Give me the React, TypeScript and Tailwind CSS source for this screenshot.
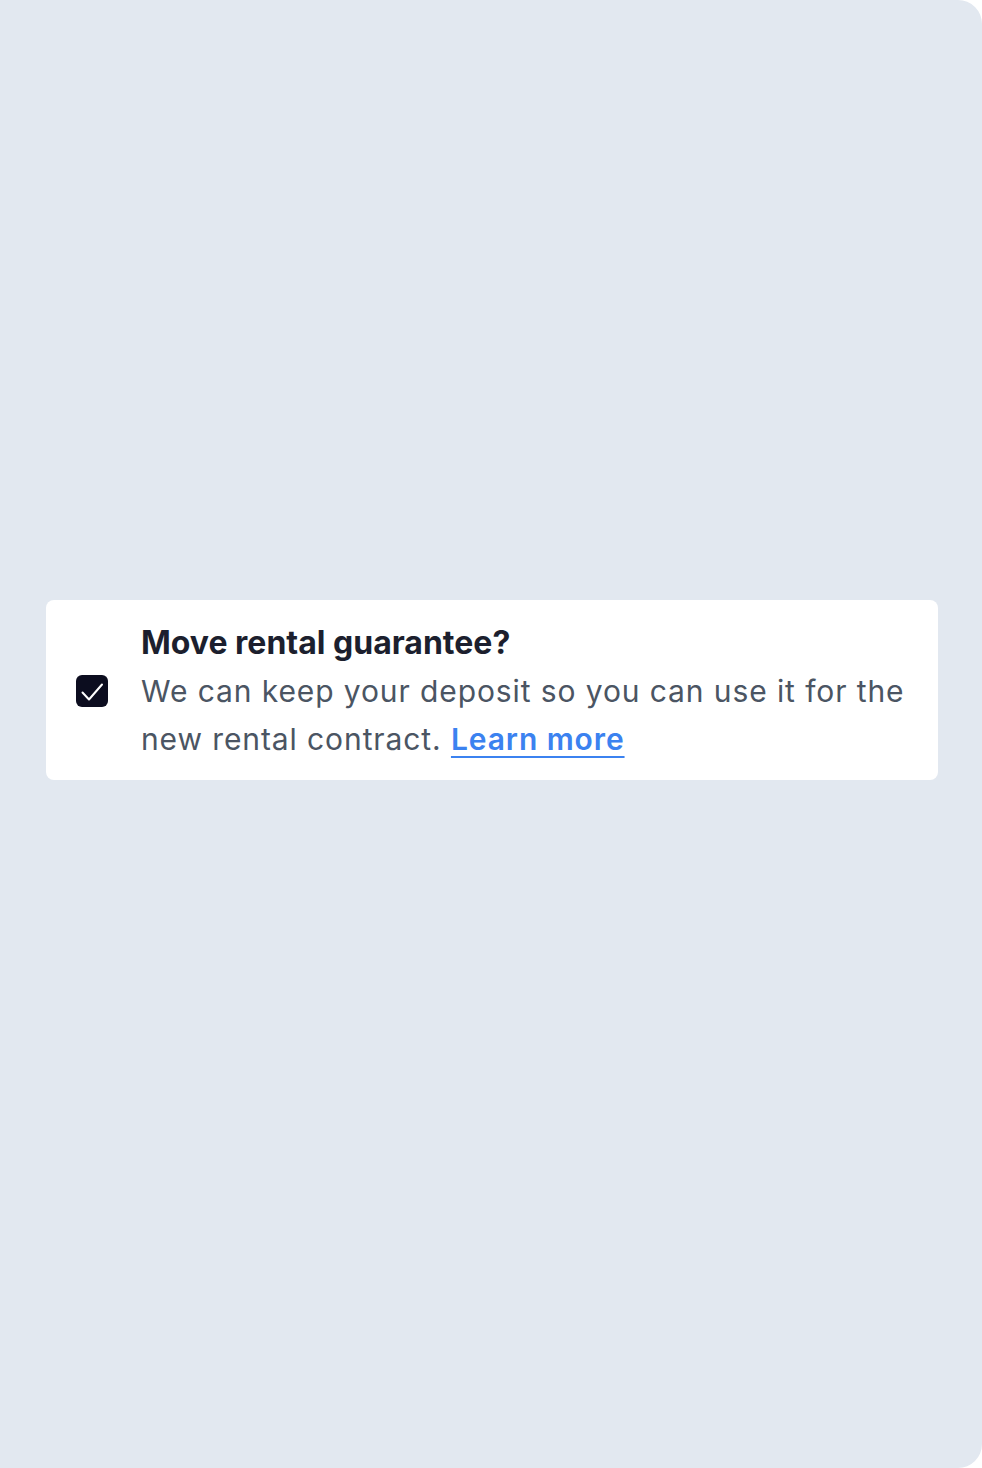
export default function App() {
  return (
    <div className="min-h-screen bg-white" style={{ fontFamily: "Inter, 'Noto Sans', sans-serif" }}>
      <div className="h-[1468px] w-[982px] rounded-r-3xl bg-[#e2e8f0] pt-[600px] pl-[46px] pr-[44px]">
        <label className="flex w-full items-center gap-[33px] rounded-lg bg-white pt-[19px] pb-[17px] pl-[30px] pr-[20px]">
          <span className="flex h-8 w-8 shrink-0 rounded-md bg-[#0c0d1f]">
            <svg viewBox="0 0 32 32" className="h-8 w-8" fill="none" stroke="white" strokeWidth="2" strokeLinecap="round" strokeLinejoin="round">
              <path d="M6.5 17.5l6.5 7L26 9.5" />
            </svg>
          </span>
          <div className="flex flex-col">
            <h3 className="text-[32px] font-bold leading-[48px] text-[#1c1f2e]">Move rental guarantee?</h3>
            <p className="text-[30px] leading-[48px] tracking-[0.03em] text-[#4b5563]">
              We can keep your deposit so you can use it for the new rental contract.{" "}
              <a href="#" className="font-semibold text-[#3b82f0] underline decoration-2 underline-offset-[6px]">
                Learn more
              </a>
            </p>
          </div>
        </label>
      </div>
    </div>
  );
}
